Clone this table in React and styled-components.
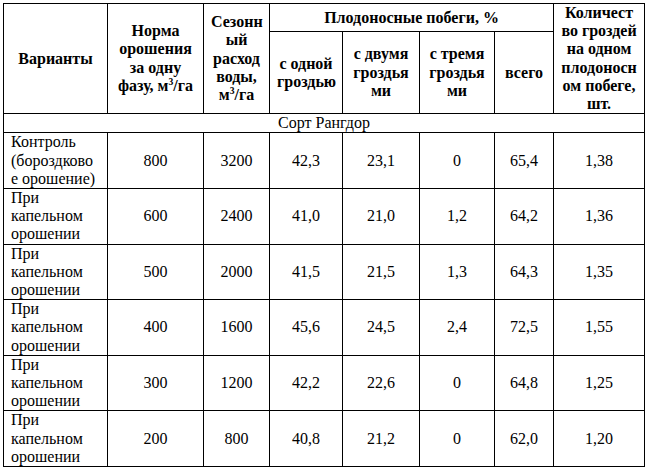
import React from "react";
import styled, { createGlobalStyle } from "styled-components";

const serif = `"Liberation Serif", Tinos, "Times New Roman", "Noto Serif", serif`;

const Global = createGlobalStyle`
  html, body { margin: 0; padding: 0; background: #fff; }
  body { font-family: ${serif}; color: #000; }
`;

const Page = styled.div`
  padding: 3px 0 0 3px;
  font-family: ${serif};
`;

const Table = styled.table`
  border-collapse: collapse;
  table-layout: fixed;
  width: 641px;
  font-family: ${serif};
  font-size: 16px;
  line-height: 18.2px;
  color: #000;
`;

const Cell = styled.td`
  border: 1px solid #000;
  padding: 0 7px;
  vertical-align: middle;
  white-space: nowrap;
  font-family: ${serif};
  font-size: 16px;
  line-height: 18.2px;
  color: #000;
`;

const HeadCell = styled.th`
  border: 1px solid #000;
  padding: 0 7px;
  vertical-align: middle;
  white-space: nowrap;
  font-family: ${serif};
  font-size: 16px;
  line-height: 18.2px;
  color: #000;
  font-weight: bold;
  text-align: center;
`;

const SortCell = styled(Cell)`
  text-align: center;
`;

const VariantCell = styled(Cell)`
  text-align: left;
`;

const NumCell = styled(Cell)`
  text-align: center;
`;

const Sup = styled.sup`
  font-size: 0.6em;
  vertical-align: 0.6em;
  line-height: 0;
`;

const Col = styled.col`
  width: ${(p) => p.$w}px;
`;

const widths = [104, 96, 66, 73, 77, 75, 59, 91];

const Lines = ({ items }) =>
  items.map((t, i) => (
    <React.Fragment key={i}>
      {i > 0 && <br />}
      {t}
    </React.Fragment>
  ));

const drip = ["При", "капельном", "орошении"];

const rows = [
  { v: ["Контроль", "(бороздково", "е орошение)"], n: ["800", "3200", "42,3", "23,1", "0", "65,4", "1,38"] },
  { v: drip, n: ["600", "2400", "41,0", "21,0", "1,2", "64,2", "1,36"] },
  { v: drip, n: ["500", "2000", "41,5", "21,5", "1,3", "64,3", "1,35"] },
  { v: drip, n: ["400", "1600", "45,6", "24,5", "2,4", "72,5", "1,55"] },
  { v: drip, n: ["300", "1200", "42,2", "22,6", "0", "64,8", "1,25"] },
  { v: drip, n: ["200", "800", "40,8", "21,2", "0", "62,0", "1,20"] },
];

export default function App() {
  return (
    <>
      <Global />
      <Page>
        <Table>
          <colgroup>
            {widths.map((w, i) => (
              <Col key={i} $w={w} />
            ))}
          </colgroup>
          <thead>
            <tr>
              <HeadCell rowSpan={2}>Варианты</HeadCell>
              <HeadCell rowSpan={2}>
                <Lines items={["Норма", "орошения", "за одну", <>фазу, м<Sup>3</Sup>/га</>]} />
              </HeadCell>
              <HeadCell rowSpan={2}>
                <Lines items={["Сезонн", "ый", "расход", "воды,", <>м<Sup>3</Sup>/га</>]} />
              </HeadCell>
              <HeadCell colSpan={4}>Плодоносные побеги, %</HeadCell>
              <HeadCell rowSpan={2}>
                <Lines items={["Количест", "во гроздей", "на одном", "плодоносн", "ом побеге,", "шт."]} />
              </HeadCell>
            </tr>
            <tr>
              <HeadCell>
                <Lines items={["с одной", "гроздью"]} />
              </HeadCell>
              <HeadCell>
                <Lines items={["с двумя", "гроздья", "ми"]} />
              </HeadCell>
              <HeadCell>
                <Lines items={["с тремя", "гроздья", "ми"]} />
              </HeadCell>
              <HeadCell>всего</HeadCell>
            </tr>
          </thead>
          <tbody>
            <tr>
              <SortCell colSpan={8}>Сорт Рангдор</SortCell>
            </tr>
            {rows.map((r, i) => (
              <tr key={i}>
                <VariantCell>
                  <Lines items={r.v} />
                </VariantCell>
                {r.n.map((n, j) => (
                  <NumCell key={j}>{n}</NumCell>
                ))}
              </tr>
            ))}
          </tbody>
        </Table>
      </Page>
    </>
  );
}
